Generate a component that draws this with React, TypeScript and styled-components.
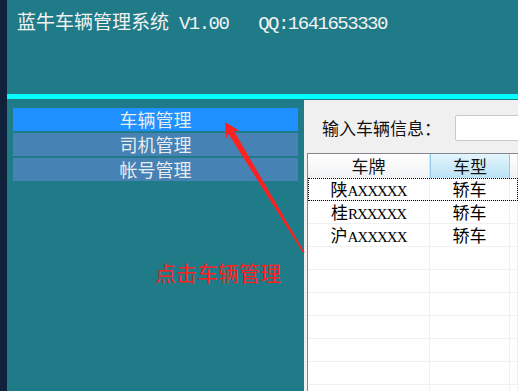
import styled, { createGlobalStyle } from "styled-components";

const GlobalStyle = createGlobalStyle`
  html, body {
    margin: 0;
    padding: 0;
    background: #10213b;
  }
  body {
    width: 518px;
    height: 391px;
    overflow: hidden;
  }
`;

const Screen = styled.div`
  position: relative;
  width: 518px;
  height: 391px;
  display: flex;
  background: #10213b;
  overflow: hidden;
`;

const Window = styled.div`
  margin-left: 7px;
  flex: 1;
  min-width: 0;
  display: flex;
  flex-direction: column;
  background: #1f7b88;
`;

const Header = styled.div`
  height: 94px;
  box-sizing: border-box;
  padding: 9px 0 0 10px;
  display: flex;
  align-items: baseline;
  color: #f2f2f2;
  white-space: pre;
`;

const TitleCjk = styled.span`
  font-family: "Noto Sans CJK SC", sans-serif;
  font-size: 19px;
  line-height: 24px;
`;

const TitleLatin = styled.span`
  font-family: "Liberation Mono", monospace;
  font-size: 19px;
  letter-spacing: -1.5px;
`;

const CyanBar = styled.div`
  height: 5px;
  background: #00ffff;
`;

const Body = styled.div`
  flex: 1;
  min-height: 0;
  display: flex;
`;

const Sidebar = styled.div`
  width: 297px;
  box-sizing: border-box;
  padding: 9px 6px 0;
  display: flex;
  flex-direction: column;
  gap: 2px;
`;

const MenuItem = styled.div<{ $active?: boolean }>`
  height: 23px;
  line-height: 23px;
  text-align: center;
  background: ${(p) => (p.$active ? "#1e90ff" : "#4682b4")};
  color: #e6ecf0;
  font-family: "Noto Sans CJK SC", sans-serif;
  font-size: 18px;
  user-select: none;
`;

const Main = styled.div`
  flex: 1;
  min-width: 0;
  margin-top: 1px;
  padding-left: 3px;
  background: #f0f0f0;
  display: flex;
  flex-direction: column;
  overflow: hidden;
`;

const SearchRow = styled.div`
  display: flex;
  align-items: center;
  gap: 14px;
  padding: 15px 0 12px 15px;
`;

const SearchLabel = styled.span`
  font-family: "Noto Sans CJK SC", sans-serif;
  font-size: 17px;
  line-height: 26px;
  color: #111;
  white-space: nowrap;
`;

const SearchInput = styled.input`
  flex-shrink: 0;
  width: 120px;
  height: 26px;
  box-sizing: border-box;
  border: 1px solid #c8c8c8;
  border-radius: 2px;
  background: #fff;
  outline: none;
`;

const Table = styled.div`
  flex: 1;
  background: #fff;
  border-left: 1px solid #828790;
  border-top: 1px solid #828790;
  overflow: hidden;
`;

const HeadRow = styled.div`
  display: grid;
  grid-template-columns: 122px 80px 1fr;
  height: 24px;
`;

const HeadCell = styled.div<{ $selected?: boolean }>`
  box-sizing: border-box;
  border-right: 1px solid ${(p) => (p.$selected ? "#8fcbe7" : "#e3e3e3")};
  border-left: ${(p) => (p.$selected ? "1px solid #8fcbe7" : "none")};
  background: ${(p) =>
    p.$selected
      ? "linear-gradient(#e4f5fd, #bae3f6)"
      : "linear-gradient(#ffffff, #f0f1f3)"};
  text-align: center;
  font-family: "Noto Sans CJK SC", sans-serif;
  font-size: 17px;
  line-height: 23px;
  color: #111;
`;

const Row = styled.div<{ $focused?: boolean }>`
  display: grid;
  grid-template-columns: 122px 80px 1fr;
  height: 23px;
  box-sizing: border-box;
  border-bottom: 1px solid #f0f0f0;
  outline: ${(p) => (p.$focused ? "1px dotted #000" : "none")};
  outline-offset: -1px;
`;

const Cell = styled.div`
  box-sizing: border-box;
  border-right: 1px solid #f0f0f0;
  text-align: center;
  font-family: "Noto Sans CJK SC", sans-serif;
  font-size: 17px;
  line-height: 22px;
  color: #000;
  white-space: nowrap;
`;

const PlateCode = styled.span`
  font-family: "Liberation Serif", serif;
  font-size: 15px;
  letter-spacing: -1px;
`;

const Note = styled.div`
  position: absolute;
  left: 155px;
  top: 258px;
  font-family: "Noto Sans CJK SC", sans-serif;
  font-size: 21px;
  line-height: 28px;
  color: #ff2020;
  pointer-events: none;
`;

const ArrowLayer = styled.svg`
  position: absolute;
  left: 0;
  top: 0;
  pointer-events: none;
`;

const cars = [
  { plate: "陕AXXXXX", kind: "轿车" },
  { plate: "桂RXXXXX", kind: "轿车" },
  { plate: "沪AXXXXX", kind: "轿车" },
];

const menu = ["车辆管理", "司机管理", "帐号管理"];

export default function App() {
  const empty = Array.from({ length: 7 });
  return (
    <>
      <GlobalStyle />
      <Screen>
        <Window>
          <Header>
            <TitleCjk>蓝牛车辆管理系统</TitleCjk>
            <TitleLatin> V1.00   QQ:1641653330</TitleLatin>
          </Header>
          <CyanBar />
          <Body>
            <Sidebar>
              {menu.map((m, i) => (
                <MenuItem key={m} $active={i === 0}>
                  {m}
                </MenuItem>
              ))}
            </Sidebar>
            <Main>
              <SearchRow>
                <SearchLabel>输入车辆信息：</SearchLabel>
                <SearchInput />
              </SearchRow>
              <Table>
                <HeadRow>
                  <HeadCell>车牌</HeadCell>
                  <HeadCell $selected>车型</HeadCell>
                  <HeadCell />
                </HeadRow>
                {cars.map((c, i) => (
                  <Row key={c.plate} $focused={i === 0}>
                    <Cell>
                      {c.plate.slice(0, 1)}
                      <PlateCode>{c.plate.slice(1)}</PlateCode>
                    </Cell>
                    <Cell>{c.kind}</Cell>
                    <Cell />
                  </Row>
                ))}
                {empty.map((_, i) => (
                  <Row key={i}>
                    <Cell />
                    <Cell />
                    <Cell />
                  </Row>
                ))}
              </Table>
            </Main>
          </Body>
        </Window>

        <Note>点击车辆管理</Note>
        <ArrowLayer width="518" height="391" viewBox="0 0 518 391">
          <polygon
            fill="#ff2020"
            points="225,122 239.5,130.7 234,131 304.6,252.6 303.4,253.4 228.6,134 225.9,138.9"
          />
        </ArrowLayer>
      </Screen>
    </>
  );
}
